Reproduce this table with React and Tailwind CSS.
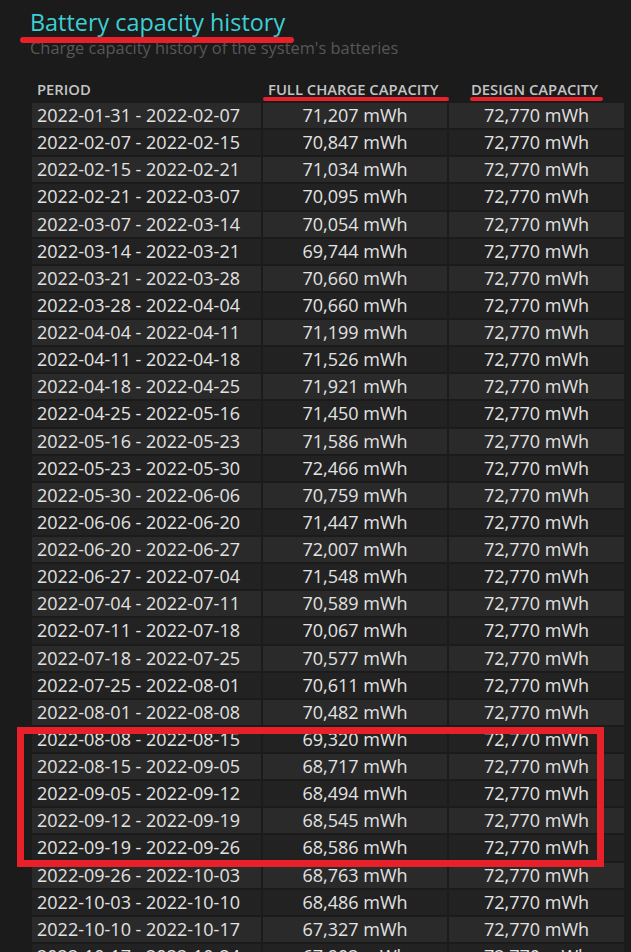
import React from "react";

const rows = [
  ["2022-01-31 - 2022-02-07", "71,207"],
  ["2022-02-07 - 2022-02-15", "70,847"],
  ["2022-02-15 - 2022-02-21", "71,034"],
  ["2022-02-21 - 2022-03-07", "70,095"],
  ["2022-03-07 - 2022-03-14", "70,054"],
  ["2022-03-14 - 2022-03-21", "69,744"],
  ["2022-03-21 - 2022-03-28", "70,660"],
  ["2022-03-28 - 2022-04-04", "70,660"],
  ["2022-04-04 - 2022-04-11", "71,199"],
  ["2022-04-11 - 2022-04-18", "71,526"],
  ["2022-04-18 - 2022-04-25", "71,921"],
  ["2022-04-25 - 2022-05-16", "71,450"],
  ["2022-05-16 - 2022-05-23", "71,586"],
  ["2022-05-23 - 2022-05-30", "72,466"],
  ["2022-05-30 - 2022-06-06", "70,759"],
  ["2022-06-06 - 2022-06-20", "71,447"],
  ["2022-06-20 - 2022-06-27", "72,007"],
  ["2022-06-27 - 2022-07-04", "71,548"],
  ["2022-07-04 - 2022-07-11", "70,589"],
  ["2022-07-11 - 2022-07-18", "70,067"],
  ["2022-07-18 - 2022-07-25", "70,577"],
  ["2022-07-25 - 2022-08-01", "70,611"],
  ["2022-08-01 - 2022-08-08", "70,482"],
  ["2022-08-08 - 2022-08-15", "69,320"],
  ["2022-08-15 - 2022-09-05", "68,717"],
  ["2022-09-05 - 2022-09-12", "68,494"],
  ["2022-09-12 - 2022-09-19", "68,545"],
  ["2022-09-19 - 2022-09-26", "68,586"],
  ["2022-09-26 - 2022-10-03", "68,763"],
  ["2022-10-03 - 2022-10-10", "68,486"],
  ["2022-10-10 - 2022-10-17", "67,327"],
  ["2022-10-17 - 2022-10-24", "67,902"],
];

const font = { fontFamily: '"Open Sans", "Noto Sans", sans-serif' };

export default function App() {
  return (
    <div className="relative h-[952px] overflow-hidden bg-[#1b1b1b] pl-[32px] pt-[6px] text-[#e2e2e2]" style={font}>
      {/* heading */}
      <h1 className="-ml-[2px] text-[23.4px] leading-[32px] text-[#3ccfd6]">Battery capacity history</h1>
      <p className="-ml-[2px] mt-0 text-[16.4px] leading-[20px] text-[#575757]">
        Charge capacity history of the system's batteries
      </p>

      {/* table */}
      <div className="mt-[19px] w-[592px]">
        <div className="grid h-[24px] grid-cols-[229px_184px_175px] items-center gap-x-[2px] text-[14.8px] font-semibold text-[#c4c4c4]">
          <div className="pl-[5px]">PERIOD</div>
          <div className="pl-[5px]">FULL CHARGE CAPACITY</div>
          <div className="pl-[22px]">DESIGN CAPACITY</div>
        </div>
        <div className="mt-[2px] flex flex-col gap-y-[2px]">
          {rows.map(([period, full], i) => (
            <div
              key={period}
              className="grid h-[25.13px] grid-cols-[229px_184px_175px] gap-x-[2px] text-[18px] leading-[25px]"
            >
              <div className={`${i % 2 === 0 ? "bg-[#2a2a2a]" : "bg-[#222222]"} pl-[5px] whitespace-nowrap`}>{period}</div>
              <div className={`${i % 2 === 0 ? "bg-[#2a2a2a]" : "bg-[#222222]"} text-center whitespace-nowrap`}>{full} mWh</div>
              <div className={`${i % 2 === 0 ? "bg-[#2a2a2a]" : "bg-[#222222]"} text-center whitespace-nowrap`}>72,770 mWh</div>
            </div>
          ))}
        </div>
      </div>

      {/* red annotations */}
      <div className="absolute left-[20px] top-[37px] h-[6px] w-[274px] rounded-full bg-[#e8202a]" />
      <div className="absolute left-[263px] top-[97px] h-[4px] w-[186px] rounded-full bg-[#e8202a]" />
      <div className="absolute left-[470px] top-[97px] h-[4px] w-[133px] rounded-full bg-[#e8202a]" />
      <div className="absolute left-[17px] top-[727px] h-[140px] w-[587px] border-[7px] border-[#e8202a]" />
    </div>
  );
}
